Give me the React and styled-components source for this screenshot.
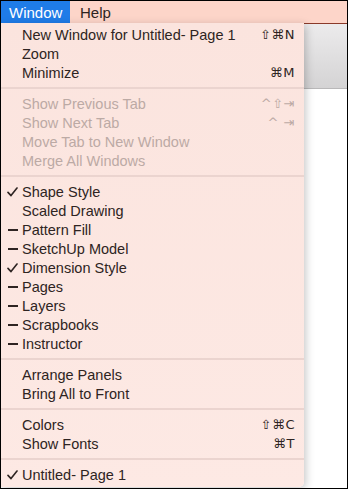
import styled, { createGlobalStyle } from 'styled-components'

const GlobalStyle = createGlobalStyle`
  html, body {
    margin: 0;
    padding: 0;
    background: #ffffff;
  }
  * {
    box-sizing: border-box;
  }
`

const sections = [
  [
    { label: 'New Window for Untitled- Page 1', keys: '⇧⌘N' },
    { label: 'Zoom' },
    { label: 'Minimize', keys: '⌘M' }
  ],
  [
    { label: 'Show Previous Tab', keys: '^⇧⇥', disabled: true },
    { label: 'Show Next Tab', keys: '^ ⇥', disabled: true },
    { label: 'Move Tab to New Window', disabled: true },
    { label: 'Merge All Windows', disabled: true }
  ],
  [
    { label: 'Shape Style', mark: 'check' },
    { label: 'Scaled Drawing' },
    { label: 'Pattern Fill', mark: 'dash' },
    { label: 'SketchUp Model', mark: 'dash' },
    { label: 'Dimension Style', mark: 'check' },
    { label: 'Pages', mark: 'dash' },
    { label: 'Layers', mark: 'dash' },
    { label: 'Scrapbooks', mark: 'dash' },
    { label: 'Instructor', mark: 'dash' }
  ],
  [{ label: 'Arrange Panels' }, { label: 'Bring All to Front' }],
  [
    { label: 'Colors', keys: '⇧⌘C' },
    { label: 'Show Fonts', keys: '⌘T' }
  ],
  [{ label: 'Untitled- Page 1', mark: 'check' }]
]

const Mark = ({ type }) => {
  if (type === 'check') {
    return (
      <MarkSlot>
        <svg width="11" height="10" viewBox="0 0 11 10">
          <path d="M1 5.4 L4 8.6 L10 1" fill="none" stroke="#2e2422" strokeWidth="1.6" strokeLinecap="round" strokeLinejoin="round" />
        </svg>
      </MarkSlot>
    )
  }
  if (type === 'dash') {
    return (
      <MarkSlot>
        <Dash />
      </MarkSlot>
    )
  }
  return <MarkSlot />
}

export default function App() {
  return (
    <>
      <GlobalStyle />
      <Frame>
        <MenuBar>
          <MenuTitle active>Window</MenuTitle>
          <MenuTitle>Help</MenuTitle>
        </MenuBar>
        <Body>
          <Menu>
            {sections.map((items, s) => (
              <div key={s}>
                {s > 0 && <Separator />}
                {items.map((item) => (
                  <Item key={item.label} disabled={item.disabled}>
                    <Mark type={item.mark} />
                    <Label>{item.label}</Label>
                    {item.keys && <Keys>{item.keys}</Keys>}
                  </Item>
                ))}
              </div>
            ))}
          </Menu>
          <Backdrop>
            <Toolbar />
          </Backdrop>
        </Body>
      </Frame>
    </>
  )
}

const Frame = styled.div`
  width: 348px;
  height: 489px;
  border: 1px solid #000000;
  display: flex;
  flex-direction: column;
  overflow: hidden;
  font-family: 'Liberation Sans', 'DejaVu Sans', sans-serif;
  font-size: 14.5px;
  color: #2e2422;
`
const MenuBar = styled.div`
  height: 22px;
  flex-shrink: 0;
  display: flex;
  align-items: stretch;
  background: #fdd5c9;
`
const MenuTitle = styled.div`
  display: flex;
  align-items: center;
  padding: ${({ active }) => (active ? '0 0 0 8px' : '0 10px')};
  width: ${({ active }) => (active ? '69px' : 'auto')};
  background: ${({ active }) => (active ? '#1f7ce8' : 'transparent')};
  color: ${({ active }) => (active ? '#ffffff' : '#2e2422')};
  font-size: 15px;
`
const Body = styled.div`
  flex: 1;
  display: flex;
  align-items: flex-start;
  min-height: 0;
`
const Menu = styled.div`
  position: relative;
  z-index: 1;
  width: 303px;
  flex-shrink: 0;
  padding: 2px 0 3px;
  background: linear-gradient(180deg, #fbe4de 0%, #fde9e4 100%);
  border-bottom-right-radius: 5px;
  box-shadow: 2px 2px 8px rgba(0, 0, 0, 0.22);
`
const Item = styled.div`
  height: 19px;
  display: flex;
  align-items: center;
  padding-right: 9px;
  color: ${({ disabled }) => (disabled ? '#bcaaa5' : '#2e2422')};
`
const MarkSlot = styled.span`
  width: 21px;
  flex-shrink: 0;
  display: flex;
  justify-content: center;
  padding-left: 2px;
`
const Dash = styled.span`
  width: 10px;
  height: 2px;
  background: #2e2422;
  display: block;
`
const Label = styled.span`
  flex: 1;
  white-space: nowrap;
`
const Keys = styled.span`
  font-family: 'DejaVu Sans', sans-serif;
  font-size: 13px;
  letter-spacing: 0.5px;
  white-space: pre;
`
const Separator = styled.div`
  height: 2px;
  margin: 5px 0 5px;
  background: #ebd4cf;
`
const Backdrop = styled.div`
  flex: 1;
  align-self: stretch;
  display: flex;
  flex-direction: column;
  background: #ffffff;
`
const Toolbar = styled.div`
  height: 66px;
  border-top: 1px solid #8a3a2a;
  border-bottom: 1px solid #b9b8b9;
  background: linear-gradient(180deg, #ecebec 0%, #d4d3d4 100%);
`
